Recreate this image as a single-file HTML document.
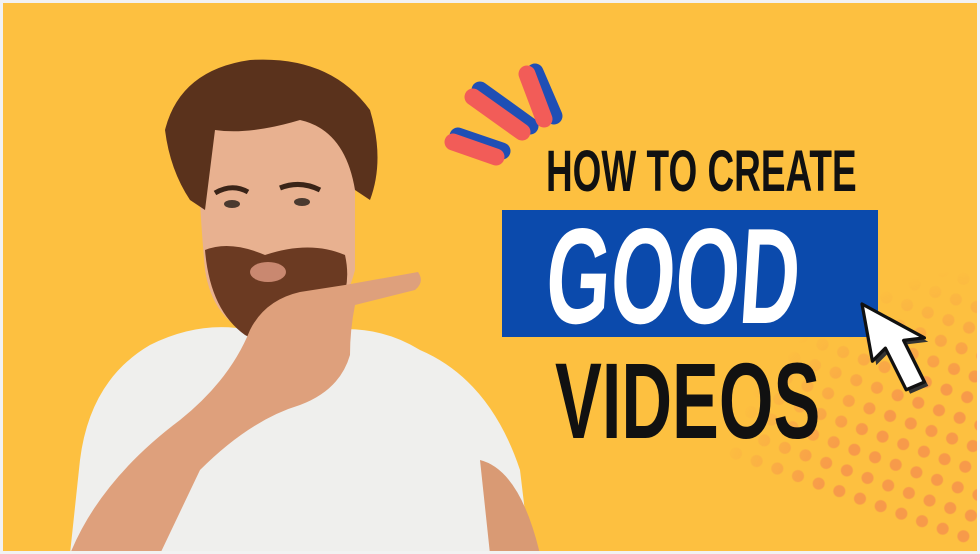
<!DOCTYPE html>
<html><head><style>
html,body{margin:0;padding:0;}
body{width:980px;height:554px;overflow:hidden;background:#f2f2f2;position:relative;font-family:"Liberation Sans",sans-serif;}
#bg{position:absolute;left:3px;top:3px;width:974px;height:548px;background:#fdc040;overflow:hidden;}
.t{position:absolute;font-weight:bold;line-height:1;white-space:nowrap;transform-origin:0 0;}
#dots{position:absolute;left:700px;top:270px;width:290px;height:290px;
background-image:radial-gradient(circle,#f79a4a 0 5.5px,transparent 6.5px);
background-size:22px 22px;
-webkit-mask-image:radial-gradient(circle at 100% 100%,#000 0,#000 45%,transparent 72%);
mask-image:radial-gradient(circle at 100% 100%,#000 0,#000 45%,transparent 72%);transform:rotate(20deg);transform-origin:100% 100%;}
</style></head><body>
<div id="bg">
<div id="dots"></div>
<svg width="980" height="554" style="position:absolute;left:-3px;top:-3px">
 <g stroke-linecap="round" stroke-width="17">
  <line x1="458" y1="136" x2="502" y2="151" stroke="#1f4fb5"/>
  <line x1="453" y1="142" x2="496" y2="157" stroke="#f25c58"/>
  <line x1="480" y1="90" x2="530" y2="126" stroke="#1f4fb5"/>
  <line x1="473" y1="97" x2="522" y2="132" stroke="#f25c58"/>
  <line x1="535" y1="72" x2="554" y2="116" stroke="#1f4fb5"/>
  <line x1="527" y1="74" x2="544" y2="119" stroke="#f25c58"/>
 </g>
 <rect x="502" y="210" width="376" height="127" fill="#0b4aac"/>
 <g transform="translate(862,304) scale(1.3) translate(-862,-302)">
 <path d="M862 302 L870 346 L880 336 L896 368 L910 362 L894 330 L910 328 Z" fill="#333" transform="translate(3,3)"/>
 <path d="M862 302 L870 346 L880 336 L896 368 L910 362 L894 330 L910 328 Z" fill="#fff" stroke="#111" stroke-width="2.5" stroke-linejoin="round"/>
 </g>
 <path d="M150 345 Q200 320 250 330 L330 330 Q380 325 420 350 Q490 380 520 470 L530 554 L70 554 L80 460 Q90 380 150 345Z" fill="#efefed"/>
 <path d="M480 460 Q520 470 540 554 L490 554 Z" fill="#d99a74"/>
 <path d="M200 90 Q230 70 290 80 Q350 95 355 160 L355 270 Q340 330 280 340 Q215 335 205 270 Q195 160 200 90Z" fill="#e8b190"/>
 <path d="M165 130 Q180 70 250 60 Q330 55 370 110 Q385 160 370 200 L355 190 Q345 130 300 120 Q250 135 215 130 L205 210 L190 200 Q170 170 165 130Z" fill="#5a321c"/>
 <path d="M205 250 Q230 240 265 255 Q310 240 345 255 Q355 300 320 330 Q280 355 245 335 Q210 310 205 250Z" fill="#6b3a22"/>
 <ellipse cx="268" cy="272" rx="18" ry="10" fill="#c98870"/>
 <path d="M70 554 Q100 480 180 420 Q230 380 250 330 Q265 300 300 292 L345 285 L418 272 Q425 282 415 290 L355 305 Q350 330 350 355 Q340 390 300 405 Q250 420 200 470 L160 554 Z" fill="#dea07c"/>
 <path d="M215 193 Q232 183 248 192" stroke="#3a2418" stroke-width="5" fill="none"/>
 <path d="M280 188 Q300 180 320 190" stroke="#3a2418" stroke-width="5" fill="none"/>
 <ellipse cx="232" cy="204" rx="8" ry="4" fill="#4a3a30"/>
 <ellipse cx="302" cy="202" rx="8" ry="4" fill="#4a3a30"/>
</svg>
<div class="t" style="left:543px;top:140px;font-size:58px;color:#111;transform:scaleX(0.637)">HOW TO CREATE</div>
<div class="t" style="left:548px;top:205px;font-size:136px;color:#fff;transform:scaleX(0.61) skewX(-6deg)">GOOD</div>
<div class="t" style="left:552px;top:344px;font-size:108px;color:#111;transform:scaleX(0.65)">VIDEOS</div>
</div>
</body></html>
